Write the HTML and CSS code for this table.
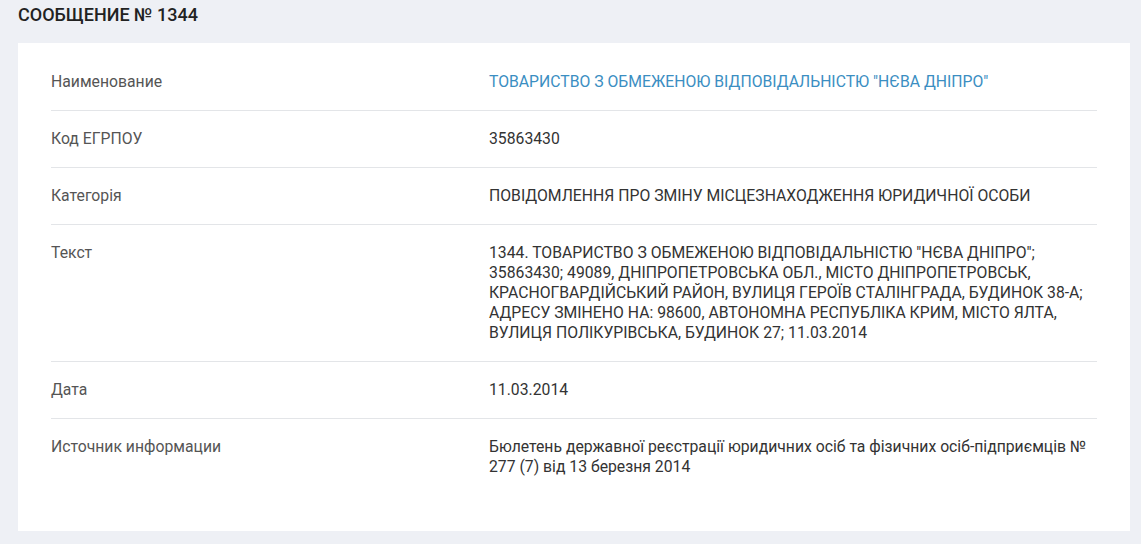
FILE: index.html
```html
<!DOCTYPE html>
<html lang="uk">
<head>
<meta charset="utf-8">
<title>Сообщение № 1344</title>
<link rel="stylesheet" href="styles.css">
</head>
<body>
<div class="page">
  <h1 class="title">СООБЩЕНИЕ № 1344</h1>
  <div class="card">
    <div class="row">
      <div class="label">Наименование</div>
      <div class="value"><a class="link" href="#">ТОВАРИСТВО З ОБМЕЖЕНОЮ ВІДПОВІДАЛЬНІСТЮ "НЄВА ДНІПРО"</a></div>
    </div>
    <div class="row">
      <div class="label">Код ЕГРПОУ</div>
      <div class="value">35863430</div>
    </div>
    <div class="row">
      <div class="label">Категорія</div>
      <div class="value">ПОВІДОМЛЕННЯ ПРО ЗМІНУ МІСЦЕЗНАХОДЖЕННЯ ЮРИДИЧНОЇ ОСОБИ</div>
    </div>
    <div class="row">
      <div class="label">Текст</div>
      <div class="value">1344. ТОВАРИСТВО З ОБМЕЖЕНОЮ ВІДПОВІДАЛЬНІСТЮ "НЄВА ДНІПРО";<br>35863430; 49089, ДНІПРОПЕТРОВСЬКА ОБЛ., МІСТО ДНІПРОПЕТРОВСЬК,<br>КРАСНОГВАРДІЙСЬКИЙ РАЙОН, ВУЛИЦЯ ГЕРОЇВ СТАЛІНГРАДА, БУДИНОК 38-А;<br>АДРЕСУ ЗМІНЕНО НА: 98600, АВТОНОМНА РЕСПУБЛІКА КРИМ, МІСТО ЯЛТА,<br>ВУЛИЦЯ ПОЛІКУРІВСЬКА, БУДИНОК 27; 11.03.2014</div>
    </div>
    <div class="row">
      <div class="label">Дата</div>
      <div class="value">11.03.2014</div>
    </div>
    <div class="row last">
      <div class="label">Источник информации</div>
      <div class="value">Бюлетень державної реєстрації юридичних осіб та фізичних осіб-підприємців №<br>277 (7) від 13 березня 2014</div>
    </div>
  </div>
</div>
</body>
</html>
```
FILE: styles.css
```css
html, body {
  margin: 0;
  padding: 0;
}
body {
  background: #eef0f5;
  font-family: Roboto, "Liberation Sans", sans-serif;
  color: #333;
}
.page {
  padding: 0 11px 0 18px;
}
.title {
  margin: 0;
  padding: 5px 0 0;
  height: 43px;
  box-sizing: border-box;
  font-size: 18px;
  font-weight: 500;
  line-height: 20px;
  color: #222;
}
.card {
  background: #fff;
  padding: 11px 33px 36px;
}
.row {
  display: grid;
  grid-template-columns: 438px 1fr;
  padding: 18px 0;
  border-bottom: 1px solid #e3e5e8;
  font-size: 15.75px;
  line-height: 20px;
}
.row.last {
  border-bottom: none;
}
.label {
  color: #555;
}
.value {
  color: #333;
}
.link {
  color: #3b8ec2;
  text-decoration: none;
}
```
